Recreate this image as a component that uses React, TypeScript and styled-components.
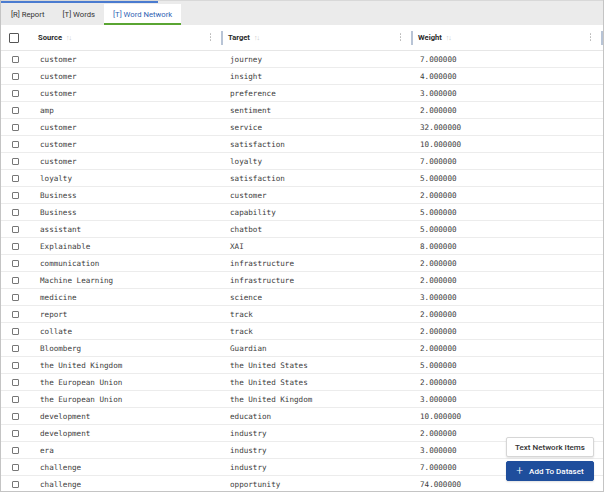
import React from "react";
import styled, { createGlobalStyle } from "styled-components";

const Global = createGlobalStyle`
  html, body { margin: 0; padding: 0; background: #fff; }
  * { box-sizing: border-box; }
`;

const Frame = styled.div`
  position: relative;
  width: 604px;
  height: 492px;
  border: 1px solid #c4c4c4;
  border-top: none;
  overflow: hidden;
  font-family: Roboto, "Liberation Sans", sans-serif;
  display: flex;
  flex-direction: column;
`;

const Progress = styled.div`
  height: 4px;
  background: #ebebeb;
  border-top: 1px solid #d8d8d8;
  display: flex;
  align-items: flex-start;
`;

const ProgressFill = styled.div`
  height: 2px;
  background: #4a7bd0;
`;

const TabBar = styled.div`
  display: flex;
  height: 21px;
  background: #ebebeb;
  padding-left: 1px;
`;

const Tab = styled.div<{ $active?: boolean }>`
  display: flex;
  align-items: center;
  padding: 0 9px;
  font-size: 7.7px;
  color: ${(p) => (p.$active ? "#2f5fb3" : "#333")};
  background: ${(p) => (p.$active ? "#fff" : "transparent")};
  border-bottom: 2px solid ${(p) => (p.$active ? "#5aa532" : "transparent")};
  padding-top: 1px;
`;

const Grid = `
  display: grid;
  grid-template-columns: 29px 190px 190px 190px;
`;

const HeaderRow = styled.div`
  ${Grid}
  height: 26px;
  border-bottom: 1px solid #e6e6e6;
  align-items: center;
`;

const HeaderCell = styled.div`
  position: relative;
  display: flex;
  align-items: center;
  height: 100%;
  padding-left: 8px;
  font-size: 7.6px;
  font-weight: 700;
  color: #2b2b2b;
`;

const SortIcon = styled.span`
  margin-left: 4px;
  color: #c8c8c8;
  font-size: 7px;
  font-weight: 400;
  letter-spacing: -1px;
`;

const Kebab = styled.span`
  position: absolute;
  right: 9px;
  top: 8px;
  display: flex;
  flex-direction: column;
  gap: 1.5px;
  & > i {
    width: 1.5px;
    height: 1.5px;
    background: #b9b9b9;
    border-radius: 50%;
  }
`;

const Resizer = styled.span`
  position: absolute;
  right: -3px;
  top: 6px;
  width: 2px;
  height: 14px;
  background: #b8c4d6;
`;

const CheckCell = styled.div<{ $pad: number }>`
  display: flex;
  align-items: center;
  padding-left: ${(p) => p.$pad}px;
  height: 100%;
`;

const Box = styled.span<{ $size: number }>`
  width: ${(p) => p.$size}px;
  height: ${(p) => p.$size}px;
  border: 1px solid ${(p) => (p.$size > 8 ? "#555" : "#777")};
  border-radius: 1px;
  background: #fff;
`;

const Body = styled.div`
  flex: 1;
  overflow: hidden;
`;

const Row = styled.div`
  ${Grid}
  height: 17px;
  border-bottom: 1px solid #ececec;
  align-items: center;
`;

const Cell = styled.div`
  padding-left: 10px;
  font-family: "DejaVu Sans Mono", "Liberation Mono", monospace;
  font-size: 7.6px;
  color: #3c3c3c;
  white-space: nowrap;
`;

const Floating = styled.div`
  position: absolute;
  right: 9px;
  bottom: 10px;
  display: flex;
  flex-direction: column;
  gap: 4px;
  width: 88px;
`;

const Button = styled.button<{ $primary?: boolean }>`
  height: 20px;
  border-radius: 2px;
  font-family: Roboto, "Liberation Sans", sans-serif;
  font-size: 8px;
  font-weight: 500;
  display: flex;
  align-items: center;
  justify-content: center;
  gap: 6px;
  padding: 0;
  cursor: pointer;
  color: ${(p) => (p.$primary ? "#fff" : "#333")};
  background: ${(p) => (p.$primary ? "#1f4e9c" : "#fff")};
  border: 1px solid ${(p) => (p.$primary ? "#1f4e9c" : "#d6d6d6")};
  box-shadow: 0 1px 2px rgba(0, 0, 0, 0.12);
`;

const Plus = styled.span`
  font-size: 12px;
  font-weight: 300;
  line-height: 1;
`;

const rows: [string, string, string][] = [
  ["customer", "journey", "7.000000"],
  ["customer", "insight", "4.000000"],
  ["customer", "preference", "3.000000"],
  ["amp", "sentiment", "2.000000"],
  ["customer", "service", "32.000000"],
  ["customer", "satisfaction", "10.000000"],
  ["customer", "loyalty", "7.000000"],
  ["loyalty", "satisfaction", "5.000000"],
  ["Business", "customer", "2.000000"],
  ["Business", "capability", "5.000000"],
  ["assistant", "chatbot", "5.000000"],
  ["Explainable", "XAI", "8.000000"],
  ["communication", "infrastructure", "2.000000"],
  ["Machine Learning", "infrastructure", "2.000000"],
  ["medicine", "science", "3.000000"],
  ["report", "track", "2.000000"],
  ["collate", "track", "2.000000"],
  ["Bloomberg", "Guardian", "2.000000"],
  ["the United Kingdom", "the United States", "5.000000"],
  ["the European Union", "the United States", "2.000000"],
  ["the European Union", "the United Kingdom", "3.000000"],
  ["development", "education", "10.000000"],
  ["development", "industry", "2.000000"],
  ["era", "industry", "3.000000"],
  ["challenge", "industry", "7.000000"],
  ["challenge", "opportunity", "74.000000"],
];

const Col = ({ label }: { label: string }) => (
  <HeaderCell>
    {label}
    <SortIcon>↑↓</SortIcon>
    <Kebab>
      <i />
      <i />
      <i />
    </Kebab>
    <Resizer />
  </HeaderCell>
);

export default function App() {
  return (
    <>
      <Global />
      <Frame>
        <Progress>
          <ProgressFill style={{ width: 157 }} />
        </Progress>
        <TabBar>
          <Tab>[R] Report</Tab>
          <Tab>[T] Words</Tab>
          <Tab $active>[T] Word Network</Tab>
        </TabBar>
        <HeaderRow>
          <CheckCell $pad={8}>
            <Box $size={10} />
          </CheckCell>
          <Col label="Source" />
          <Col label="Target" />
          <Col label="Weight" />
        </HeaderRow>
        <Body>
          {rows.map((r, i) => (
            <Row key={i}>
              <CheckCell $pad={11}>
                <Box $size={7} />
              </CheckCell>
              <Cell>{r[0]}</Cell>
              <Cell>{r[1]}</Cell>
              <Cell>{r[2]}</Cell>
            </Row>
          ))}
        </Body>
        <Floating>
          <Button>Text Network Items</Button>
          <Button $primary>
            <Plus>+</Plus>
            Add To Dataset
          </Button>
        </Floating>
      </Frame>
    </>
  );
}
